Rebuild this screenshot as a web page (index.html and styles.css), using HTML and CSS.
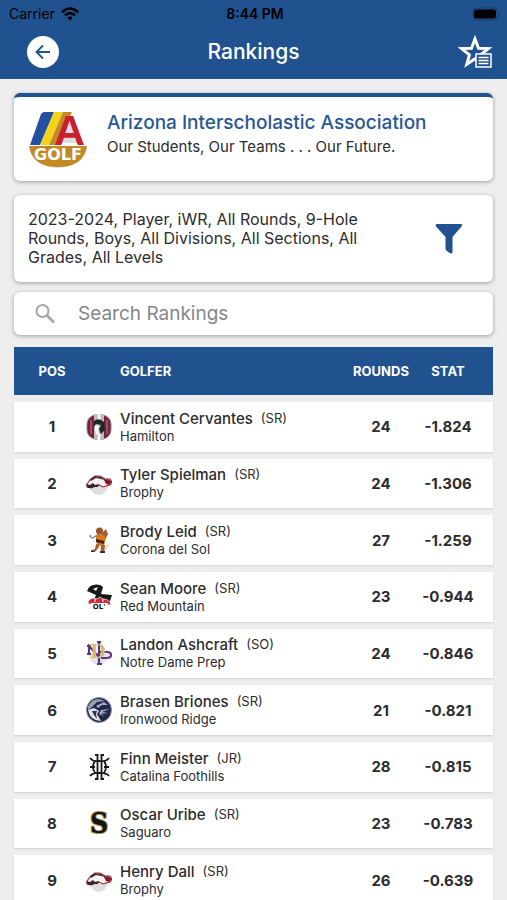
FILE: index.html
```html
<!DOCTYPE html>
<html lang="en">
<head>
<meta charset="utf-8">
<meta name="viewport" content="width=device-width, initial-scale=1">
<title>Rankings</title>
<link rel="stylesheet" href="styles.css">
</head>
<body>
<svg width="0" height="0" class="defs" aria-hidden="true">
  <symbol id="horse" viewBox="0 0 26 26">
    <path d="M3 16q10 3 20-3-2 11-10 12-7 0-10-9z" fill="#dedede"/>
    <path d="M1 14l3-4 5-4 5 0 5 3 5 0 2 3-2 3-4 1-3 1-4-2-5 1-3 2-4-1z" fill="#f6f1f1" stroke="#9c2638" stroke-width="1.1"/>
    <path d="M4 9l5-3 6 1 7 4-7-2-5-1-5 3z" fill="#4b3034"/>
    <path d="M0 14l4 1 3-2 2 2 4-1-1 3-3 0-3 1-4 0z" fill="#38262a"/>
    <path d="M18 10l4-1 4 3-3 3-3-1z" fill="#7e1a29"/>
  </symbol>
</svg>
<div class="app">
  <header class="top">
    <div class="status">
      <span class="carrier">Carrier
        <svg width="18" height="14" viewBox="0 0 18 14" fill="none" stroke="#000" stroke-width="2.6" aria-hidden="true"><path d="M1 5.2q8-7.400 16 0M4 8.300q5-4.400 10 0"/><path d="M6.300 10.700q2.700-2.200 5.400 0L9 13.500z" fill="#000" stroke="none"/></svg>
      </span>
      <span class="clock">8:44 PM</span>
      <svg class="battery" width="29" height="14" viewBox="0 0 29 14" aria-hidden="true"><rect x="1" y="1" width="25" height="12" rx="4" fill="none" stroke="#153a68"/><rect x="2" y="2.500" width="22" height="9" rx="2.500" fill="#000"/><path d="M27.500 5q1.500 2 0 4z" fill="#153a68"/></svg>
    </div>
    <div class="nav">
      <button class="back" type="button" aria-label="Back"><svg width="20" height="20" viewBox="0 0 20 20" fill="none" stroke="#20528f" stroke-width="1.800"><path d="M17 10H4M10 3.500L3.500 10l6.500 6.500"/></svg></button>
      <h1>Rankings</h1>
      <button class="fav" type="button" aria-label="Favorites"><svg width="34" height="34" viewBox="0 0 34 34"><path d="M16 4l3.500 9.200 9.900.4-7.800 6.300 2.600 9.300L16 23.800 7.800 29.200l2.600-9.300-7.800-6.300 9.900-.4z" fill="none" stroke="#fff" stroke-width="3"/><rect x="17" y="19" width="15" height="13" fill="#20528f" stroke="#fff" stroke-width="1.500"/><path d="M19.500 22.500h10M19.500 25.500h10M19.500 28.500h10" stroke="#fff" stroke-width="1.300"/></svg></button>
    </div>
  </header>
  <main>
    <section class="card org">
      <svg width="60" height="60" viewBox="0 0 60 60" role="img" aria-label="AIA Golf">
        <path d="M38 12h6l9 22H32zM10 52q20 12 40 0-8 7-20 7t-20-7z" fill="#dedede"/>
        <path d="M17 3h9L12 36H2L12 8Q13 3 17 3z" fill="#2450a0"/>
        <path d="M26 3h9L21 36h-9z" fill="#f6d31b"/>
        <path d="M35 3h9L30 36h-9z" fill="#c58a26"/>
        <text x="26" y="36" class="mark-a" fill="#c9202e">A</text>
        <path d="M1 37h58q-3 21-29 21T1 37z" fill="#c28a25"/>
        <text x="30" y="51" class="mark-golf" fill="#fff">GOLF</text>
      </svg>
      <div class="org-text">
        <h2>Arizona Interscholastic Association</h2>
        <p>Our Students, Our Teams . . . Our Future.</p>
      </div>
    </section>
    <section class="card filter">
      <p>2023-2024, Player, iWR, All Rounds, 9-Hole Rounds, Boys, All Divisions, All Sections, All Grades, All Levels</p>
      <button type="button" aria-label="Filter"><svg width="28" height="32" viewBox="0 0 28 32"><path d="M1.500 1h25q1.500 1 0 2.500L17.500 14v15q0 2-2 1.500L12 28q-1.500-1-1.500-2V14L1 3.500Q0 1.500 1.500 1z" fill="#20528f"/></svg></button>
    </section>
    <label class="card search">
      <svg width="20" height="20" viewBox="0 0 20 20" fill="none" stroke="#a6a6a6" stroke-width="2" aria-hidden="true"><circle cx="7.500" cy="7" r="6"/><path d="M12 11.500l7 7" stroke-width="2.600"/></svg>
      <input type="search" placeholder="Search Rankings" aria-label="Search Rankings">
    </label>
    <table>
      <thead><tr><th class="pos">POS</th><th class="golfer">GOLFER</th><th class="rounds">ROUNDS</th><th class="stat">STAT</th></tr></thead>
      <tbody>
        <tr><td class="pos">1</td><td><div class="player"><svg width="26" height="26" viewBox="0 0 26 26" aria-hidden="true"><rect x="1" y="1" width="24" height="24" rx="9" fill="#7c2039" stroke="#8b8b8b"/><path d="M5 6v14M21 6v14" stroke="#b4808e"/><path d="M8 0h10v26H8z" fill="#bdbdbb"/><path d="M13 0v6M13 20v6" stroke="#fff" stroke-width="2.500"/><path d="M8 7q5-4 10 1l1 8-4 4-2-5 2-4-5-1-2 3z" fill="#1d2825"/><path d="M9 11l4 1-1 6 3 4-5-2-1-4z" fill="#fff"/></svg><div><div class="name">Vincent Cervantes <small>(SR)</small></div><div class="school">Hamilton</div></div></div></td><td class="rounds">24</td><td class="stat">-1.824</td></tr>
        <tr><td class="pos">2</td><td><div class="player"><svg width="26" height="26" aria-hidden="true"><use href="#horse"/></svg><div><div class="name">Tyler Spielman <small>(SR)</small></div><div class="school">Brophy</div></div></div></td><td class="rounds">24</td><td class="stat">-1.306</td></tr>
        <tr><td class="pos">3</td><td><div class="player"><svg width="26" height="26" viewBox="0 0 26 26" aria-hidden="true"><path d="M12 20q10 2 12-7 0 9-8 12z" fill="#ddd"/><path d="M4 8q1 5 4 2l5-3" fill="none" stroke="#444"/><circle cx="13.500" cy="4" r="3.500" fill="#9c542c"/><path d="M16 6l4-4 2 5-3 6-4 1z" fill="#a75a2e"/><path d="M10 8l6-1 4 4-2 8-7-1-1-5z" fill="#d87922"/><path d="M10 12l8 2v3l-8-2z" fill="#40251c"/><path d="M10 17l4 1-4 6-4 1v-2l3-1zM15 18h4l-1 8h-3z" fill="#a65b30"/><path d="M5 23l5 2H5zM14 24h5v2h-5z" fill="#442820"/></svg><div><div class="name">Brody Leid <small>(SR)</small></div><div class="school">Corona del Sol</div></div></div></td><td class="rounds">27</td><td class="stat">-1.259</td></tr>
        <tr><td class="pos">4</td><td><div class="player"><svg width="26" height="26" viewBox="0 0 26 26" aria-hidden="true"><path d="M1 7Q4-1 14 1l3 2-2 7 11 1-3 9H6l4-9z" fill="#171719"/><path d="M7 5l5-2-2 4z" fill="#fff"/><path d="M2 20q0-6 6-6l3 1 3-2 3 2q7 0 8 6z" fill="#cd2b3c" stroke="#fff" stroke-width=".7"/><path d="M9 18v-3M17 18v-3" stroke="#fff"/><path d="M5 19h17l-3 7H8z" fill="#fff"/><text x="13" y="25" class="mark-ol" fill="#111">OL'</text></svg><div><div class="name">Sean Moore <small>(SR)</small></div><div class="school">Red Mountain</div></div></div></td><td class="rounds">23</td><td class="stat">-0.944</td></tr>
        <tr><td class="pos">5</td><td><div class="player"><svg width="26" height="26" viewBox="0 0 26 26" aria-hidden="true"><path d="M2 14h21q-2 11-11 11-8-1-10-11z" fill="#e3e3e5"/><path d="M3 14V6l10 11V2M13 10v14M11 2h4M1 6h4M1 14h4M11 24h5M14 12h7q4 0 4 3t-4 3h-6" fill="none" stroke="#5c3480" stroke-width="2.200"/><text x="4" y="18" class="mark-d" fill="#d2bb76">D</text></svg><div><div class="name">Landon Ashcraft <small>(SO)</small></div><div class="school">Notre Dame Prep</div></div></div></td><td class="rounds">24</td><td class="stat">-0.846</td></tr>
        <tr><td class="pos">6</td><td><div class="player"><svg width="26" height="26" viewBox="0 0 26 26" aria-hidden="true"><circle cx="13" cy="13" r="12.500" fill="#20264f" stroke="#8c929d"/><path d="M2 10Q5 2 13 2l6 2-8 1-5 5-4 3z" fill="#9aa0a8"/><path d="M2 13l6-2 5 3-2 3 4 7q-11 0-13-11z" fill="#dfe2e4"/><path d="M10 9l8-4 4 3-6 0-4 3zM15 13l9-1-8 3 6 1-7 1 4 3-6-3z" fill="#a7adba"/><path d="M6 14l5 0-1 3 1 5-3-4z" fill="#272e56"/></svg><div><div class="name">Brasen Briones <small>(SR)</small></div><div class="school">Ironwood Ridge</div></div></div></td><td class="rounds">21</td><td class="stat">-0.821</td></tr>
        <tr><td class="pos">7</td><td><div class="player"><svg width="26" height="26" viewBox="0 0 26 26" fill="none" stroke="#171717" stroke-width="1.800" aria-hidden="true"><path d="M18 20q5-2 6-8 0 8-7 12z" fill="#ddd" stroke="none"/><path d="M11.500 1v24M15.500 1v24M9 1h3.500M14.500 1H18M9 25h3.500M14.500 25H18M4 4q3 4 9 3 7 1 10-3M4 22q3-4 9-3 7-1 10 3M9 7q-4 6 0 12M18 7q4 6 0 12M4 13h5M18 13h5"/></svg><div><div class="name">Finn Meister <small>(JR)</small></div><div class="school">Catalina Foothills</div></div></div></td><td class="rounds">28</td><td class="stat">-0.815</td></tr>
        <tr><td class="pos">8</td><td><div class="player"><svg width="26" height="26" viewBox="0 0 26 26" aria-hidden="true"><text x="13" y="23" class="mark-s" fill="#141410" stroke="#a08c55">S</text></svg><div><div class="name">Oscar Uribe <small>(SR)</small></div><div class="school">Saguaro</div></div></div></td><td class="rounds">23</td><td class="stat">-0.783</td></tr>
        <tr><td class="pos">9</td><td><div class="player"><svg width="26" height="26" aria-hidden="true"><use href="#horse"/></svg><div><div class="name">Henry Dall <small>(SR)</small></div><div class="school">Brophy</div></div></div></td><td class="rounds">26</td><td class="stat">-0.639</td></tr>
      </tbody>
    </table>
  </main>
</div>
</body>
</html>
```
FILE: styles.css
```css
* { box-sizing: border-box; }
body { margin: 0; background: #eeeeef; color: #2c2c2e; font-family: Inter, "Liberation Sans", sans-serif; }
h1, h2, p { margin: 0; font-weight: 500; }
button { border: 0; padding: 0; background: none; display: grid; place-items: center; cursor: pointer; }
svg { display: block; flex: none; overflow: visible; }
.defs { position: absolute; }
.app { height: 100vh; display: flex; flex-direction: column; }

.top { background: #20528f; color: #fff; flex: none; }
.status { display: grid; grid-template-columns: 1fr auto 1fr; align-items: center; height: 27px; padding: 0 6px 0 9px; color: #000; font-size: 14px; }
.carrier { display: flex; align-items: center; gap: 6px; }
.clock { font-weight: 600; }
.battery { justify-self: end; }
.nav { display: grid; grid-template-columns: 1fr auto 1fr; align-items: center; height: 52px; padding: 0 14px 2px 27px; }
.nav h1 { font-size: 21px; line-height: 28px; padding-right: 13px; grid-column: 2; }
.back { width: 32px; height: 32px; border-radius: 50%; background: #fff; }
.fav { justify-self: end; }

main { flex: 1; min-height: 0; overflow-y: auto; scrollbar-width: none; padding: 14px 14px 0; }
.card { display: flex; align-items: center; background: #fff; border-radius: 6px; box-shadow: 0 1px 4px rgba(0, 0, 0, .35); }
.org { height: 88px; padding: 0 14px; gap: 19px; border-top: 4px solid #20528f; margin-bottom: 14px; }
.org-text { padding-bottom: 11px; }
.org h2 { color: #285795; font-size: 19px; line-height: 26px; }
.org p { font-size: 15px; font-weight: 400; line-height: 22px; }
.filter { height: 87px; padding: 0 30px 0 14px; justify-content: space-between; margin-bottom: 10px; }
.filter p { width: 77%; font-size: 16px; font-weight: 400; line-height: 19px; }
.search { height: 43px; padding: 0 21px; gap: 23px; margin-bottom: 5px; }
.search input { flex: 1; min-width: 0; border: 0; padding: 0; outline: 0; background: none; font: 400 19px/24px Inter, "Liberation Sans", sans-serif; color: #2c2c2e; }
.search input::placeholder { color: #86868a; opacity: 1; }

table { width: 100%; height: 572px; table-layout: fixed; border-collapse: separate; border-spacing: 0 7px; }
th, td { padding: 0; }
th { height: 48px; background: #20528f; color: #fff; font-size: 13px; font-weight: 700; }
td { background: #fff; font-size: 15px; font-weight: 700; }
tbody tr { box-shadow: 0 1px 2px rgba(0, 0, 0, .12); }
.pos { width: 72px; padding-left: 4px; text-align: center; }
.golfer { padding-left: 34px; text-align: left; }
.rounds { width: 64px; text-align: center; }
.stat { width: 80px; padding-right: 10px; text-align: center; }
.player { display: flex; align-items: center; gap: 8px; font-weight: 400; }
.name { font-size: 15px; line-height: 18px; font-weight: 500; white-space: nowrap; }
.name small { font-size: 13px; font-weight: 400; margin-left: 4px; vertical-align: top; line-height: 16px; }
.school { font-size: 13px; line-height: 16px; }

.mark-a { font: 700 43px "Liberation Sans", sans-serif; }
.mark-golf { font: 700 16px "DejaVu Sans", sans-serif; text-anchor: middle; }
.mark-ol { font: 700 7px "DejaVu Sans", sans-serif; text-anchor: middle; }
.mark-d { font: 700 18px "DejaVu Serif", serif; }
.mark-s { font: 700 28px "DejaVu Serif Condensed", "DejaVu Serif", serif; text-anchor: middle; stroke-width: 2px; paint-order: stroke; }
```
